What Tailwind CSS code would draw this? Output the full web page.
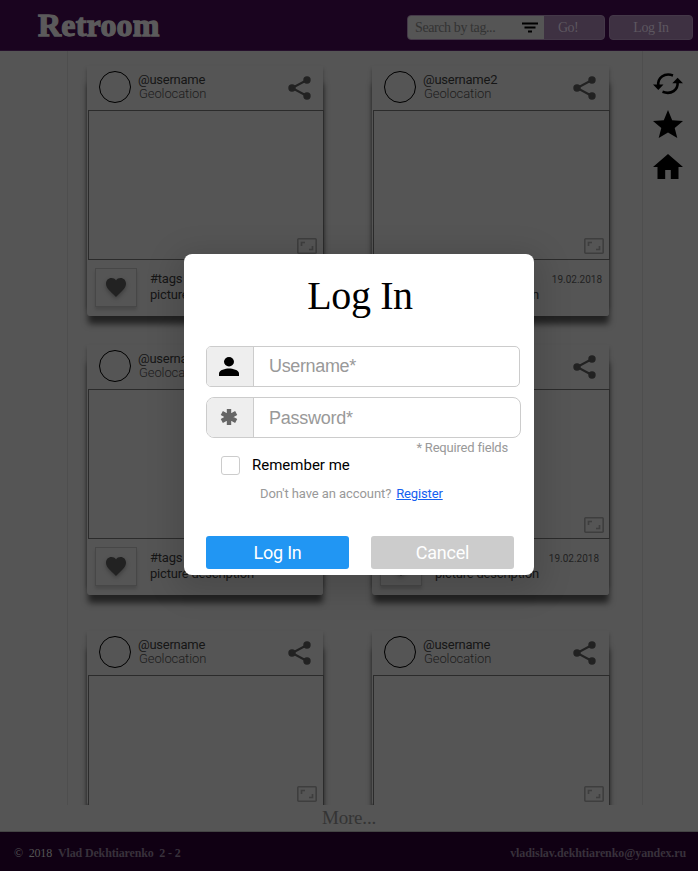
<!DOCTYPE html>
<html lang="en">
<head>
<meta charset="utf-8">
<title>Retroom</title>
<script src="https://cdn.jsdelivr.net/npm/@tailwindcss/browser@4"></script>
</head>
<body class="relative w-[698px] h-[871px] overflow-hidden bg-[#555555] font-['Roboto',sans-serif] flex flex-col">

<header class="h-[51px] shrink-0 bg-[#1a041f] border-b border-[#25102b] flex items-start pl-[38px] pr-[5px]">
  <div class="w-[369px] pt-[6px]"><span class="inline-block origin-left font-['Liberation_Serif',serif] font-bold text-[32px] leading-[38px] tracking-[0.2px] text-[#5b5a5b] [-webkit-text-stroke:1.3px_#5b5a5b]">Retroom</span></div>
  <div class="mt-[15px] flex h-[25px] w-[198px] shrink-0 rounded-[4px] overflow-hidden border border-[#443848] bg-[#3e3142] font-['Liberation_Serif',serif] text-[14px] leading-[23px]">
    <div class="w-[136px] bg-[#555555] flex items-center justify-between pl-[7px] pr-[6px] text-[#333333]">
      <span class="tracking-[-0.400px]">Search by tag...</span>
      <svg width="16" height="11" viewBox="0 0 16 11" fill="#000"><path d="M0 .5h16v2H0zM2.500 4.500h11v2h-11zM6 8.500h4v2H6z"/></svg>
    </div>
    <span class="pl-[14px] tracking-[-0.5px] text-[#5d5760]">Go!</span>
  </div>
  <div class="mt-[15px] ml-[4px] h-[25px] w-[84px] shrink-0 rounded-[4px] border border-[#443848] bg-[#3e3142] text-center font-['Liberation_Serif',serif] text-[14px] leading-[23px] text-[#5d5760] tracking-[-0.400px]">Log In</div>
</header>

<main class="h-[754px] shrink-0 flex overflow-hidden">
  <div class="w-[68px] border-r border-[#4e4e4e] shrink-0"></div>
  <section id="feed" class="w-[574px] shrink-0 grid grid-cols-[236px_237px] gap-x-[49px] content-start pl-[19px] pt-[15px]"></section>
  <nav class="flex-1 border-l border-[#4e4e4e] flex flex-col items-center pt-[19px] pr-[6px]">
    <svg class="mb-[12px]" width="30" height="28" viewBox="0 0 30 28" fill="none" stroke="#000" stroke-width="2.600"><path d="M5.300 15.500C4.500 8 11 2.500 20 5.400M24.600 12C25.200 20 18.500 25 9.500 21.800"/><path d="M0 14.500h10.500l-5.200 5.500zM19.300 13.300h10.700l-5.400-5.600z" fill="#000" stroke="none"/></svg>
    <svg class="mb-[16px]" width="30" height="28" viewBox="0 0 30 28"><path d="M15 0l4.200 10.200L30 11l-8.300 7.100L24.300 28 15 22.400 5.700 28l2.600-9.900L0 11l10.800-.8z"/></svg>
    <svg width="30" height="25" viewBox="0 0 30 25"><path d="M15 0L0 13h4.500v12h7.700v-9h5.600v9h7.700V13H30z"/></svg>
  </nav>
</main>

<div class="h-[27px] shrink-0 border-b border-[#444] text-center font-['Liberation_Serif',serif] text-[19px] leading-[25px] tracking-[-0.2px] text-[#343434]">More...</div>
<footer class="h-[39px] shrink-0 bg-[#100013] flex items-center justify-between pl-[14px] pr-[12px] pt-[3px] font-['Liberation_Serif',serif] font-bold text-[12px] text-[#38313b]">
  <div class="flex tracking-[-0.150px]"><span class="w-[44px] whitespace-pre text-[#555] font-normal">©  2018</span><span class="whitespace-pre">Vlad Dekhtiarenko  2 - 2</span></div>
  <div class="tracking-[-0.1px]">vladislav.dekhtiarenko@yandex.ru</div>
</footer>

<!-- Login dialog -->
<div class="absolute left-[184px] top-[254px] w-[350px] h-[321px] rounded-[8px] bg-white px-[22px] flex flex-col shadow-[0_8px_30px_10px_rgba(0,0,0,0.13)]">
  <h1 class="h-[92px] pt-[18px] pl-[2px] text-center font-['Liberation_Serif',serif] text-[40px] leading-[48px] tracking-[-0.400px] text-black">Log In</h1>
  <div class="h-[41px] w-[314px] shrink-0 flex rounded-[5px] border border-[#ccc] overflow-hidden font-['Liberation_Sans',sans-serif] text-[18px] leading-[39px] text-[#999]">
    <div class="w-[47px] bg-[#eee] border-r border-[#ccc] flex items-center justify-center pr-[2px]"><svg width="20" height="19" viewBox="0 0 20 20" preserveAspectRatio="none"><circle cx="10" cy="5" r="5"/><path d="M0 20v-3c0-3.300 6.500-5 10-5s10 1.700 10 5v3z"/></svg></div>
    <span class="pl-[15px] tracking-[-0.350px]">Username*</span>
  </div>
  <div class="mt-[10px] h-[41px] w-[315px] shrink-0 flex rounded-[8px] border border-[#ccc] overflow-hidden font-['Liberation_Sans',sans-serif] text-[18px] leading-[41px] text-[#999]">
    <div class="w-[47px] bg-[#eee] border-r border-[#ccc] flex items-center justify-center pr-[2px] pb-[2px]"><svg width="18" height="18" viewBox="0 0 18 18" stroke="#666" stroke-width="4.400" stroke-linejoin="round"><path d="M9 1v16M1.800 5l14.400 8M16.200 5L1.800 13"/></svg></div>
    <span class="pl-[15px] tracking-[-0.250px]">Password*</span>
  </div>
  <div class="h-[17px] pr-[4px] text-right text-[13px] leading-[19px] tracking-[-0.200px] text-[#999]">* Required fields</div>
  <div class="h-[20px] flex items-center pl-[15px] text-[15px] text-black"><span class="size-[19px] rounded-[3px] border-[1.5px] border-[#ccc] mr-[12px]"></span>Remember me</div>
  <div class="mt-[10px] pl-[54px] h-[18px] text-[13px] leading-[18px] tracking-[-0.080px] text-[#999]">Don't have an account?<a class="ml-[5px] text-[#1560f0] underline tracking-[-0.150px]">Register</a></div>
  <div class="mt-[33px] flex gap-[22px] text-[18px] leading-[34px] tracking-[-0.200px] text-white text-center">
    <button class="w-[143px] h-[33px] rounded-[3px] bg-[#2196f3] shrink-0">Log In</button>
    <button class="w-[143px] h-[33px] rounded-[3px] bg-[#ccc] shrink-0">Cancel</button>
  </div>
</div>

<script>
const heights = ['h-[279px]', 'h-[286px]', 'h-[174px]'];
const body = (row, right) => row === 2 ? '' : `
  <div class="h-[56px] flex">
    <div class="ml-[8px] mt-[8px] w-[42px] h-[39px] shrink-0 border-[1.5px] border-[#474747] flex items-center justify-center pr-[1px] shadow-[0_3px_3px_rgba(0,0,0,0.14)]"><svg class="drop-shadow-[0_2px_2px_rgba(0,0,0,0.3)]" width="20" height="19" viewBox="0 0 22 20" fill="#222" preserveAspectRatio="none"><path d="M11 20L8 17C3 12.500 0 9.800 0 6 0 2.500 2.600 0 6 0c2 0 3.800.9 5 2.500C12.200.9 14 0 16 0c3.400 0 6 2.500 6 6 0 3.800-3 6.500-8 11z"/></svg></div>
    <div class="ml-[13px] mt-[11px] text-[13px] leading-[15.500px] tracking-[-0.200px] text-[#161616] whitespace-nowrap"><div>#tags</div><div>${right || row ? 'picture description' : 'picture'}</div></div>
    <div class="ml-auto mt-[13px] ${row ? 'mr-[10px]' : 'mr-[7px]'} text-[10px] leading-[14px] text-[#222]">${right ? '19.02.2018' : ''}</div>
  </div>`;
const card = (user, row, right) => `
<article class="relative ${heights[row]}">
 <div class="absolute left-px right-0 top-[10px] ${row === 2 ? 'h-[200px]' : 'h-[240px]'} rounded-b-[3px] shadow-[0_8px_6px_0px_rgba(0,0,0,0.6)]"></div>
 <div class="absolute left-0 right-0 top-[3px] ${row === 2 ? 'h-[200px]' : 'h-[240px]'} shadow-[0_0_4px_0px_rgba(0,0,0,0.3)]"></div>
 <div class="relative w-full rounded-b-[3px] bg-[#555555]">
  <div class="h-[44px] flex items-start">
    <div class="ml-[12px] mt-[5px] size-[32px] rounded-full border-[1.5px] border-black"></div>
    <div class="ml-[7px] mt-[7px] text-[13px] leading-[14px] tracking-[-0.250px] text-[#161616]"><div>${user}</div><div class="pl-[1px] tracking-[-0.100px] font-light text-[#1c1c1c]">Geolocation</div></div>
    <svg class="ml-auto ${right ? 'mr-[13px]' : 'mr-[12px]'} mt-[10px]" width="23" height="24" viewBox="0 0 23 24" fill="#222" stroke="#222" stroke-width="2"><path d="M19 4L4 12l15 8" fill="none"/><circle cx="19" cy="4" r="2.700"/><circle cx="4" cy="12" r="2.700"/><circle cx="19" cy="20" r="2.700"/></svg>
  </div>
  <div class="ml-px ${row === 2 ? 'h-[130px] border-b-0 pb-[3px]' : 'h-[150px] pb-[5px]'} ${right ? 'w-[237px] pr-[5px]' : 'w-[236px] pr-[6px]'} border border-[#2b2b2b] flex items-end justify-end">
    <svg width="20" height="16" viewBox="0 0 20 16" fill="none" stroke="#3e3e3e" stroke-width="1.600"><rect x=".8" y=".8" width="18.400" height="14.400" rx="1"/><path d="M4.500 8V4.500H8M15.500 8v3.500H12"/></svg>
  </div>${body(row, right)}
 </div>
</article>`;
document.getElementById('feed').innerHTML =
  card('@username', 0, false) + card('@username2', 0, true) +
  card('@username', 1, false) + card('@username', 1, true) +
  card('@username', 2, false) + card('@username', 2, true);
</script>
</body>
</html>
